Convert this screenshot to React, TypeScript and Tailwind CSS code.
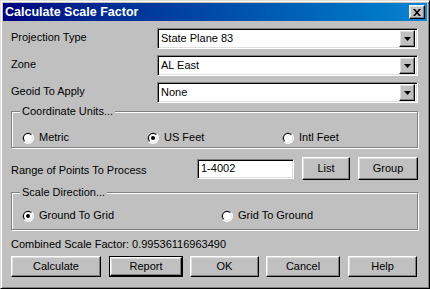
import React from 'react';

const raised =
  'bg-[#c0c0c0] border border-t-white border-l-white border-r-black border-b-black shadow-[inset_-1px_-1px_#808080,inset_1px_1px_#dfdfdf]';
const sunken =
  'bg-white border border-t-[#808080] border-l-[#808080] border-r-white border-b-white shadow-[inset_1px_1px_#000,inset_-1px_-1px_#dfdfdf]';

function Radio({ checked }: { checked?: boolean }) {
  return (
    <svg width="12" height="12" viewBox="0 0 12 12" className="shrink-0">
      <circle cx="6" cy="6" r="6" fill="#fff" />
      <path d="M1.76 10.24 A6 6 0 0 1 10.24 1.76 Z" fill="#808080" />
      <circle cx="6" cy="6" r="5" fill="#dfdfdf" />
      <path d="M2.46 9.54 A5 5 0 0 1 9.54 2.46 Z" fill="#000" />
      <circle cx="6" cy="6" r="4" fill="#fff" />
      {checked && <circle cx="6" cy="6" r="2" fill="#000" />}
    </svg>
  );
}

function RadioItem({ label, checked, w }: { label: string; checked?: boolean; w: string }) {
  return (
    <div className={`flex items-center gap-[5px] ${w}`}>
      <Radio checked={checked} />
      <span>{label}</span>
    </div>
  );
}

function Combo({ value }: { value: string }) {
  return (
    <div className={`${sunken} w-[261px] h-[21px] flex items-center justify-between pl-[3px] pr-[2px]`}>
      <span className="leading-none">{value}</span>
      <div className={`${raised} w-[16px] h-[17px] flex items-center justify-center`}>
        <svg width="7" height="4" viewBox="0 0 7 4">
          <path d="M0 0h7L3.5 4z" fill="#000" />
        </svg>
      </div>
    </div>
  );
}

function Btn({ label, w, isDefault }: { label: string; w: string; isDefault?: boolean }) {
  if (isDefault) {
    return (
      <div className={`border border-black ${w} h-[21px] flex`}>
        <div className={`${raised} flex-1 flex items-center justify-center`}>{label}</div>
      </div>
    );
  }
  return <div className={`${raised} ${w} h-[21px] flex items-center justify-center`}>{label}</div>;
}

function Group({ title, h, children }: { title: string; h: string; children: React.ReactNode }) {
  return (
    <div className={`relative ${h} w-[407px] border border-[#808080] shadow-[1px_1px_#fff,inset_1px_1px_#fff]`}>
      <span className="absolute left-[8px] top-[-7px] bg-[#c0c0c0] px-[2px] leading-[13px]">{title}</span>
      {children}
    </div>
  );
}

export default function App() {
  return (
    <div
      className="w-[430px] h-[289px] flex flex-col bg-[#c0c0c0] border border-t-[#dfdfdf] border-l-[#dfdfdf] border-r-black border-b-black shadow-[inset_1px_1px_#fff,inset_-1px_-1px_#808080] p-[2px] text-black text-[11px] leading-[13px] select-none"
      style={{ fontFamily: '"Liberation Sans", Arial, sans-serif' }}
    >
      <div className="h-[18px] flex items-center justify-between bg-gradient-to-r from-[#000080] to-[#1084d0] pl-[2px] pr-[2px]">
        <span className="text-white font-bold text-[12.5px] leading-[14px]">Calculate Scale Factor</span>
        <div className={`${raised} w-[16px] h-[14px] flex items-center justify-center`}>
          <svg width="8" height="7" viewBox="0 0 8 7">
            <path d="M0 0h2l2 2.2L6 0h2L5 3.5 8 7H6L4 4.8 2 7H0l3-3.5z" fill="#000" />
          </svg>
        </div>
      </div>

      <div className="flex flex-col pl-[8px] pr-[9px]">
        <div className="mt-[7px] flex flex-col gap-[6px]">
          {[
            ['Projection Type', 'State Plane 83'],
            ['Zone', 'AL East'],
            ['Geoid To Apply', 'None'],
          ].map(([label, value]) => (
            <div key={label} className="flex items-center">
              <span className="w-[146px] -mt-[3px]">{label}</span>
              <Combo value={value} />
            </div>
          ))}
        </div>

        <div className="mt-[8px]">
          <Group title="Coordinate Units..." h="h-[37px]">
            <div className="flex items-center pl-[10px] pt-[19px]">
              <RadioItem label="Metric" w="w-[125px]" />
              <RadioItem label="US Feet" checked w="w-[135px]" />
              <RadioItem label="Intl Feet" w="w-[100px]" />
            </div>
          </Group>
        </div>

        <div className="mt-[9px] flex items-center h-[23px]">
          <span className="w-[186px] mt-[3px]">Range of Points To Process</span>
          <div className={`${sunken} w-[97px] h-[20px] flex items-center pl-[3px]`}>1-4002</div>
          <div className={`${raised} ml-[8px] w-[48px] h-[23px] flex items-center justify-center`}>List</div>
          <div className={`${raised} ml-[8px] w-[60px] h-[23px] flex items-center justify-center`}>Group</div>
        </div>

        <div className="mt-[12px]">
          <Group title="Scale Direction..." h="h-[38px]">
            <div className="flex items-center pl-[10px] pt-[16px]">
              <RadioItem label="Ground To Grid" checked w="w-[199px]" />
              <RadioItem label="Grid To Ground" w="w-[150px]" />
            </div>
          </Group>
        </div>

        <div className="mt-[8px]">Combined Scale Factor: 0.99536116963490</div>

        <div className="mt-[5px] flex items-center">
          <Btn label="Calculate" w="w-[90px]" />
          <div className="ml-[8px]">
            <Btn label="Report" w="w-[74px]" isDefault />
          </div>
          <div className="ml-[7px]">
            <Btn label="OK" w="w-[69px]" />
          </div>
          <div className="ml-[7px]">
            <Btn label="Cancel" w="w-[74px]" />
          </div>
          <div className="ml-[8px]">
            <Btn label="Help" w="w-[69px]" />
          </div>
        </div>
      </div>
    </div>
  );
}
